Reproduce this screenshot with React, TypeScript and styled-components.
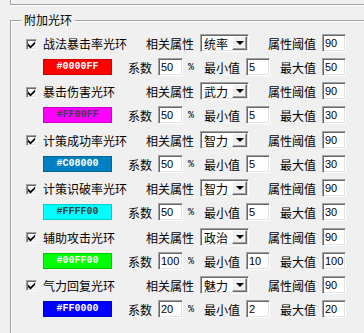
import React from "react";
import styled, { createGlobalStyle } from "styled-components";

const GlobalStyle = createGlobalStyle`
  html, body {
    margin: 0;
    padding: 0;
    background: #f0f0f0;
  }
  body {
    font-family: "Noto Sans CJK SC", "Liberation Sans", sans-serif;
    font-size: 12px;
    color: #000;
  }
`;

const Page = styled.div`
  width: 364px;
  height: 333px;
  overflow: hidden;
  background: #f0f0f0;
`;

const PrevGroupEdge = styled.div`
  margin-left: 10px;
  height: 4px;
  border-left: 1px solid #a0a0a0;
  border-bottom: 1px solid #a0a0a0;
  box-shadow: inset 1px 0 0 #fff, 0 1px 0 #fff;
`;

const GroupBox = styled.div`
  position: relative;
  margin: 15px 0 0 10px;
  height: 320px;
  border-top: 1px solid #a0a0a0;
  border-left: 1px solid #a0a0a0;
  box-shadow: inset 1px 1px 0 #fff;
  padding-top: 12px;
`;

const Legend = styled.span`
  position: absolute;
  top: -9px;
  left: 10px;
  padding: 0 3px;
  background: #f0f0f0;
  line-height: 16px;
`;

const Block = styled.div`
  height: 48.4px;
`;

const TopLine = styled.div`
  display: grid;
  grid-template-columns: 15px 11px 6px 103px 54px 49px 19px 54px 24px;
  align-items: center;
  height: 18px;
`;

const BottomLine = styled.div`
  display: grid;
  grid-template-columns: 32px 69px 16px 30px 25px 5px 16px 42px 24px 10px 42px 24px;
  align-items: center;
  height: 18px;
  margin-top: 6px;
`;

const Label = styled.span<{ $col: number }>`
  grid-column: ${(p) => p.$col};
  white-space: nowrap;
  line-height: 18px;
  padding-top: 2px;
`;

const Percent = styled.span`
  grid-column: 7;
  font-family: "Liberation Mono", monospace;
  font-size: 10px;
  line-height: 18px;
  padding-top: 2px;
`;

const sunken = `
  border-top: 1px solid #a0a0a0;
  border-left: 1px solid #a0a0a0;
  border-right: 1px solid #fff;
  border-bottom: 1px solid #fff;
  box-shadow: inset 1px 1px 0 #696969, inset -1px -1px 0 #e3e3e3;
`;

const CheckBox = styled.span`
  grid-column: 2;
  box-sizing: border-box;
  width: 11px;
  height: 11px;
  ${sunken}
  background: #fff;
  display: flex;
  align-items: center;
  justify-content: center;
  margin-top: 2px;
`;

const Field = styled.div<{ $col: number }>`
  grid-column: ${(p) => p.$col};
  box-sizing: border-box;
  height: 18px;
  ${sunken}
  background: #fff;
  font-family: "Liberation Sans", sans-serif;
  font-size: 11px;
  line-height: 16px;
  padding-left: 2px;
  overflow: hidden;
  white-space: nowrap;
`;

const Select = styled.div`
  grid-column: 6;
  box-sizing: border-box;
  height: 18px;
  ${sunken}
  background: #fff;
  display: flex;
  align-items: stretch;
  padding: 1px;
`;

const SelectText = styled.span`
  flex: 1;
  padding-left: 2px;
  line-height: 15px;
`;

const DropButton = styled.span`
  box-sizing: border-box;
  width: 15px;
  background: #f0f0f0;
  border-top: 1px solid #fff;
  border-left: 1px solid #fff;
  border-right: 1px solid #696969;
  border-bottom: 1px solid #696969;
  box-shadow: inset -1px -1px 0 #a0a0a0;
  display: flex;
  align-items: center;
  justify-content: center;
`;

const Arrow = styled.span`
  width: 0;
  height: 0;
  border-left: 4px solid transparent;
  border-right: 4px solid transparent;
  border-top: 4px solid #000;
`;

const Swatch = styled.div<{ $bg: string; $fg: string }>`
  grid-column: 2;
  box-sizing: border-box;
  height: 16px;
  background: ${(p) => p.$bg};
  border: 1px solid rgba(0, 0, 0, 0.2);
  color: ${(p) => p.$fg};
  font-family: "Liberation Mono", monospace;
  font-weight: bold;
  font-size: 10px;
  line-height: 14px;
  text-align: center;
`;

const CheckMark = () => (
  <svg width="9" height="9" viewBox="0 0 9 9">
    <path d="M1 3.5 L3.5 6 L8 1.5 L8 4 L3.5 8.5 L1 6 Z" fill="#000" />
  </svg>
);

type Aura = {
  name: string;
  attr: string;
  threshold: number;
  code: string;
  bg: string;
  fg: string;
  factor: number;
  min: number;
  max: number;
};

const auras: Aura[] = [
  { name: "战法暴击率光环", attr: "统率", threshold: 90, code: "#0000FF", bg: "#ff0000", fg: "#ffffff", factor: 50, min: 5, max: 50 },
  { name: "暴击伤害光环", attr: "武力", threshold: 90, code: "#FF00FF", bg: "#ff00ff", fg: "#404040", factor: 50, min: 5, max: 30 },
  { name: "计策成功率光环", attr: "智力", threshold: 90, code: "#C08000", bg: "#0080c0", fg: "#ffffff", factor: 50, min: 5, max: 30 },
  { name: "计策识破率光环", attr: "智力", threshold: 90, code: "#FFFF00", bg: "#00ffff", fg: "#404040", factor: 50, min: 5, max: 30 },
  { name: "辅助攻击光环", attr: "政治", threshold: 90, code: "#00FF00", bg: "#00ff00", fg: "#ffffff", factor: 100, min: 10, max: 100 },
  { name: "气力回复光环", attr: "魅力", threshold: 90, code: "#FF0000", bg: "#0000ff", fg: "#ffffff", factor: 20, min: 2, max: 20 },
];

const AuraBlock: React.FC<{ aura: Aura }> = ({ aura }) => (
  <Block>
    <TopLine>
      <CheckBox>
        <CheckMark />
      </CheckBox>
      <Label $col={4}>{aura.name}</Label>
      <Label $col={5}>相关属性</Label>
      <Select>
        <SelectText>{aura.attr}</SelectText>
        <DropButton>
          <Arrow />
        </DropButton>
      </Select>
      <Label $col={8}>属性阈值</Label>
      <Field $col={9}>{aura.threshold}</Field>
    </TopLine>
    <BottomLine>
      <Swatch $bg={aura.bg} $fg={aura.fg}>
        {aura.code}
      </Swatch>
      <Label $col={4}>系数</Label>
      <Field $col={5}>{aura.factor}</Field>
      <Percent>%</Percent>
      <Label $col={8}>最小值</Label>
      <Field $col={9}>{aura.min}</Field>
      <Label $col={11}>最大值</Label>
      <Field $col={12}>{aura.max}</Field>
    </BottomLine>
  </Block>
);

export default function App() {
  return (
    <Page>
      <GlobalStyle />
      <PrevGroupEdge />
      <GroupBox>
        <Legend>附加光环</Legend>
        {auras.map((a) => (
          <AuraBlock key={a.name} aura={a} />
        ))}
      </GroupBox>
    </Page>
  );
}
